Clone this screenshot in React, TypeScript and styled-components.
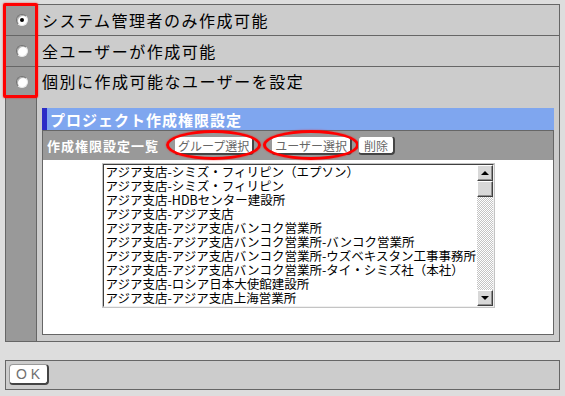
import React from "react";
import styled, { createGlobalStyle } from "styled-components";

const GlobalStyle = createGlobalStyle`
  html, body { margin: 0; padding: 0; background: #dddddd; }
  body { font-family: "Noto Sans CJK JP", "Noto Sans", sans-serif; }
`;

const Page = styled.div`
  width: 565px;
  height: 396px;
  box-sizing: border-box;
  padding: 4px 5px 0 5px;
  background: #dddddd;
`;

const OptionsTable = styled.div`
  position: relative;
  border: 1px solid #666;
  display: flex;
  flex-direction: column;
`;

const ColumnHighlight = styled.div`
  position: absolute;
  left: -3px;
  top: -2px;
  width: 35px;
  height: 95px;
  box-sizing: border-box;
  border: 3px solid #ff0000;
  border-radius: 2px;
  box-shadow: 0 0 2px rgba(255, 0, 0, 0.7);
  pointer-events: none;
`;

const Row = styled.div<{ $last?: boolean }>`
  display: flex;
  border-bottom: ${(p) => (p.$last ? "none" : "1px solid #666")};
`;

const RadioCell = styled.div`
  width: 31px;
  flex: none;
  box-sizing: border-box;
  background: #999999;
  border-right: 1px solid #666;
  display: flex;
  justify-content: center;
  align-items: flex-start;
  padding-top: 9px;
  padding-left: 2px;
`;

const Radio = styled.span<{ $checked?: boolean }>`
  position: relative;
  width: 12px;
  height: 12px;
  box-sizing: border-box;
  border-radius: 50%;
  background: #ffffff;
  border: 1px solid;
  border-color: #707070 #e8e8e8 #e8e8e8 #707070;
  box-shadow: inset 1px 1px 0 #b0b0b0;
  &::after {
    content: "";
    display: ${(p) => (p.$checked ? "block" : "none")};
    position: absolute;
    left: 3px;
    top: 3px;
    width: 4px;
    height: 4px;
    border-radius: 50%;
    background: #000;
  }
`;

const ContentCell = styled.div<{ $padBottom?: boolean }>`
  flex: 1;
  background: #cccccc;
  padding: 0 5px ${(p) => (p.$padBottom ? "6px" : "0")} 5px;
  display: flex;
  flex-direction: column;
`;

const OptionLabel = styled.div<{ $tight?: boolean }>`
  height: 30px;
  display: flex;
  align-items: center;
  padding-bottom: ${(p) => (p.$tight ? "3px" : "0")};
  box-sizing: border-box;
  font-size: 16px;
  letter-spacing: 1.5px;
  color: #000;
  white-space: nowrap;
`;

const Panel = styled.div`
  margin-top: 11px;
  display: flex;
  flex-direction: column;
`;

const PanelTitle = styled.div`
  height: 22px;
  box-sizing: border-box;
  background: #7fa6ef;
  border-left: 5px solid #2c2cc6;
  padding-left: 3px;
  display: flex;
  align-items: center;
  font-size: 15px;
  font-weight: bold;
  color: #ffffff;
  letter-spacing: 1px;
  white-space: nowrap;
`;

const HeaderRow = styled.div`
  height: 30px;
  box-sizing: border-box;
  background: #999999;
  border: 1px solid #666;
  border-bottom: none;
  padding-left: 4px;
  display: flex;
  align-items: center;
`;

const HeaderText = styled.span`
  font-size: 13px;
  font-weight: bold;
  letter-spacing: 1px;
  color: #ffffff;
  white-space: nowrap;
`;

const Button = styled.button<{ $ml: number; $pad?: number; $circled?: boolean }>`
  position: relative;
  margin-left: ${(p) => p.$ml}px;
  height: 19px;
  box-sizing: border-box;
  padding: 0 ${(p) => p.$pad ?? 3}px;
  background: #ffffff;
  border: 1px solid #999;
  border-right: 2px solid #444;
  border-bottom: 2px solid #444;
  border-radius: 4px;
  font-family: "Noto Sans CJK JP", sans-serif;
  font-size: 12px;
  line-height: 15px;
  color: #666;
  white-space: nowrap;
  &::after {
    content: "";
    display: ${(p) => (p.$circled ? "block" : "none")};
    position: absolute;
    inset: -7px -9px -7px -9px;
    border: 3px solid #ff0000;
    border-radius: 50%;
    box-shadow: 0 0 2px rgba(255, 0, 0, 0.6);
    pointer-events: none;
  }
`;

const ListArea = styled.div`
  height: 175px;
  box-sizing: border-box;
  background: #ffffff;
  border: 1px solid #666;
  border-top: none;
  padding-top: 3px;
  display: flex;
  justify-content: center;
  align-items: flex-start;
`;

const SelectBox = styled.div`
  width: 393px;
  height: 145px;
  box-sizing: border-box;
  border: 1px solid #c4c4c4;
  background: #fff;
  display: flex;
`;

const SelectInner = styled.div`
  flex: 1;
  display: flex;
  border-top: 1px solid #404040;
  border-left: 1px solid #404040;
  border-right: 1px solid #f0f0f0;
  border-bottom: 1px solid #f0f0f0;
  min-width: 0;
`;

const Options = styled.div`
  flex: 1;
  overflow: hidden;
  padding: 0 0 0 2px;
  min-width: 0;
`;

const OptionItem = styled.div`
  font-size: 12.5px;
  line-height: 14px;
  height: 14px;
  color: #000;
  white-space: nowrap;
`;

const Scrollbar = styled.div`
  width: 16px;
  flex: none;
  display: flex;
  flex-direction: column;
`;

const ScrollPart = styled.div`
  height: 16px;
  flex: none;
  box-sizing: border-box;
  background: #d8d8d8;
  border-top: 1px solid #ffffff;
  border-left: 1px solid #ffffff;
  border-right: 1px solid #404040;
  border-bottom: 1px solid #404040;
  box-shadow: inset -1px -1px 0 #909090;
  display: flex;
  align-items: center;
  justify-content: center;
`;

const Arrow = styled.span<{ $down?: boolean }>`
  width: 0;
  height: 0;
  border-left: 4px solid transparent;
  border-right: 4px solid transparent;
  ${(p) =>
    p.$down ? "border-top: 4px solid #000;" : "border-bottom: 4px solid #000;"}
`;

const Track = styled.div`
  flex: 1;
  background: repeating-conic-gradient(#c4c4c4 0% 25%, #ffffff 0% 50%) 0 0 / 2px 2px;
`;

const Footer = styled.div`
  margin-top: 18px;
  height: 30px;
  box-sizing: border-box;
  border: 1px solid #666;
  background: #cccccc;
  padding: 3px 3px;
  display: flex;
  align-items: flex-start;
`;

const OkButton = styled.button`
  width: 40px;
  height: 21px;
  box-sizing: border-box;
  padding: 0 0 0 3px;
  background: #ffffff;
  border: 1px solid #999;
  border-right: 2px solid #444;
  border-bottom: 2px solid #444;
  border-radius: 4px;
  font-family: "Liberation Sans", sans-serif;
  font-size: 14px;
  letter-spacing: 4px;
  color: #707070;
`;

const items = [
  "アジア支店-シミズ・フィリピン（エプソン）",
  "アジア支店-シミズ・フィリピン",
  "アジア支店-HDBセンター建設所",
  "アジア支店-アジア支店",
  "アジア支店-アジア支店バンコク営業所",
  "アジア支店-アジア支店バンコク営業所-バンコク営業所",
  "アジア支店-アジア支店バンコク営業所-ウズベキスタン工事事務所",
  "アジア支店-アジア支店バンコク営業所-タイ・シミズ社（本社）",
  "アジア支店-ロシア日本大使館建設所",
  "アジア支店-アジア支店上海営業所",
];

export default function App() {
  return (
    <>
      <GlobalStyle />
      <Page>
        <OptionsTable>
          <Row>
            <RadioCell>
              <Radio $checked />
            </RadioCell>
            <ContentCell>
              <OptionLabel>システム管理者のみ作成可能</OptionLabel>
            </ContentCell>
          </Row>
          <Row>
            <RadioCell>
              <Radio />
            </RadioCell>
            <ContentCell>
              <OptionLabel>全ユーザーが作成可能</OptionLabel>
            </ContentCell>
          </Row>
          <Row $last>
            <RadioCell>
              <Radio />
            </RadioCell>
            <ContentCell $padBottom>
              <OptionLabel $tight>個別に作成可能なユーザーを設定</OptionLabel>
              <Panel>
                <PanelTitle>プロジェクト作成権限設定</PanelTitle>
                <HeaderRow>
                  <HeaderText>作成権限設定一覧</HeaderText>
                  <Button $ml={15} $circled>
                    グループ選択
                  </Button>
                  <Button $ml={17} $circled>
                    ユーザー選択
                  </Button>
                  <Button $ml={6} $pad={5}>
                    削除
                  </Button>
                </HeaderRow>
                <ListArea>
                  <SelectBox>
                    <SelectInner>
                      <Options>
                        {items.map((t) => (
                          <OptionItem key={t}>{t}</OptionItem>
                        ))}
                      </Options>
                      <Scrollbar>
                        <ScrollPart>
                          <Arrow />
                        </ScrollPart>
                        <ScrollPart />
                        <Track />
                        <ScrollPart>
                          <Arrow $down />
                        </ScrollPart>
                      </Scrollbar>
                    </SelectInner>
                  </SelectBox>
                </ListArea>
              </Panel>
            </ContentCell>
          </Row>
          <ColumnHighlight />
        </OptionsTable>
        <Footer>
          <OkButton>OK</OkButton>
        </Footer>
      </Page>
    </>
  );
}
